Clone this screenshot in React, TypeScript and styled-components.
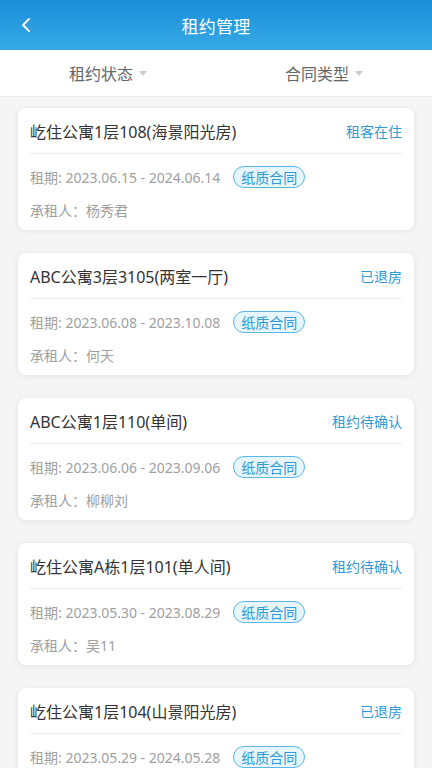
import styled, { createGlobalStyle } from "styled-components";

const GlobalStyle = createGlobalStyle`
  * { box-sizing: border-box; }
  body {
    margin: 0;
    background: #f5f5f5;
    font-family: "Noto Sans", "Noto Sans CJK SC", sans-serif;
  }
`;

const Page = styled.div`
  width: 432px;
  min-height: 768px;
  background: #f5f5f5;
`;

const Header = styled.header`
  position: relative;
  height: 50px;
  display: flex;
  align-items: center;
  justify-content: center;
  background: linear-gradient(180deg, #1a8fd9 0%, #37a9e6 100%);
  color: #fff;
`;

const BackButton = styled.button`
  position: absolute;
  left: 14px;
  top: 12px;
  width: 24px;
  height: 26px;
  padding: 0;
  border: 0;
  background: none;
  display: flex;
  align-items: center;
  justify-content: center;
`;

const HeaderTitle = styled.h1`
  margin: 0;
  font-size: 17px;
  font-weight: 400;
  letter-spacing: 0.3px;
`;

const FilterBar = styled.nav`
  height: 47px;
  display: grid;
  grid-template-columns: 1fr 1fr;
  background: #fff;
  border-bottom: 1px solid #e9e9e9;
`;

const Filter = styled.div`
  display: flex;
  align-items: center;
  justify-content: center;
  gap: 6px;
  font-size: 16px;
  color: #666;
`;

const Caret = styled.span`
  width: 0;
  height: 0;
  border-left: 4px solid transparent;
  border-right: 4px solid transparent;
  border-top: 5px solid #ccc;
  margin-top: 1px;
`;

const List = styled.main`
  display: flex;
  flex-direction: column;
  gap: 23px;
  padding: 11px 18px 20px;
`;

const Card = styled.section`
  background: #fff;
  border-radius: 8px;
  box-shadow: 0 1px 6px rgba(0, 0, 0, 0.08);
  padding: 12px 12px 9px;
`;

const CardHead = styled.div`
  display: flex;
  align-items: center;
  justify-content: space-between;
  height: 22px;
`;

const RoomName = styled.h2`
  margin: 0;
  font-size: 16px;
  font-weight: 400;
  color: #333;
`;

const Status = styled.span`
  font-size: 14px;
  color: #2e9ad6;
`;

const Divider = styled.hr`
  margin: 11px 0 12px;
  border: 0;
  border-top: 1px solid #ececec;
`;

const InfoRow = styled.div<{ $gap?: number }>`
  display: flex;
  align-items: center;
  gap: 13px;
  height: 22px;
  margin-bottom: ${(p) => p.$gap ?? 0}px;
  font-size: 14px;
  color: #a0a0a0;
`;

const Tag = styled.span`
  display: inline-flex;
  align-items: center;
  height: 22px;
  padding: 0 7px;
  border: 1px solid #5bb6ea;
  border-radius: 11px;
  background: #e7f5fd;
  color: #2e9ad6;
  font-size: 14px;
`;

type Lease = {
  room: string;
  status: string;
  period: string;
  tenant: string;
};

const leases: Lease[] = [
  { room: "屹住公寓1层108(海景阳光房)", status: "租客在住", period: "2023.06.15 - 2024.06.14", tenant: "杨秀君" },
  { room: "ABC公寓3层3105(两室一厅)", status: "已退房", period: "2023.06.08 - 2023.10.08", tenant: "何天" },
  { room: "ABC公寓1层110(单间)", status: "租约待确认", period: "2023.06.06 - 2023.09.06", tenant: "柳柳刘" },
  { room: "屹住公寓A栋1层101(单人间)", status: "租约待确认", period: "2023.05.30 - 2023.08.29", tenant: "吴11" },
  { room: "屹住公寓1层104(山景阳光房)", status: "已退房", period: "2023.05.29 - 2024.05.28", tenant: "陈明" },
];

const App = () => {
  return (
    <Page>
      <GlobalStyle />
      <Header>
        <BackButton aria-label="返回">
          <svg width="12" height="16" viewBox="0 0 12 16" fill="none">
            <path d="M9 2L3 8l6 6" stroke="#fff" strokeWidth="1.8" strokeLinecap="round" strokeLinejoin="round" />
          </svg>
        </BackButton>
        <HeaderTitle>租约管理</HeaderTitle>
      </Header>
      <FilterBar>
        <Filter>
          租约状态
          <Caret />
        </Filter>
        <Filter>
          合同类型
          <Caret />
        </Filter>
      </FilterBar>
      <List>
        {leases.map((l) => (
          <Card key={l.room}>
            <CardHead>
              <RoomName>{l.room}</RoomName>
              <Status>{l.status}</Status>
            </CardHead>
            <Divider />
            <InfoRow $gap={11}>
              <span>租期: {l.period}</span>
              <Tag>纸质合同</Tag>
            </InfoRow>
            <InfoRow>承租人：{l.tenant}</InfoRow>
          </Card>
        ))}
      </List>
    </Page>
  );
};

export default App;
